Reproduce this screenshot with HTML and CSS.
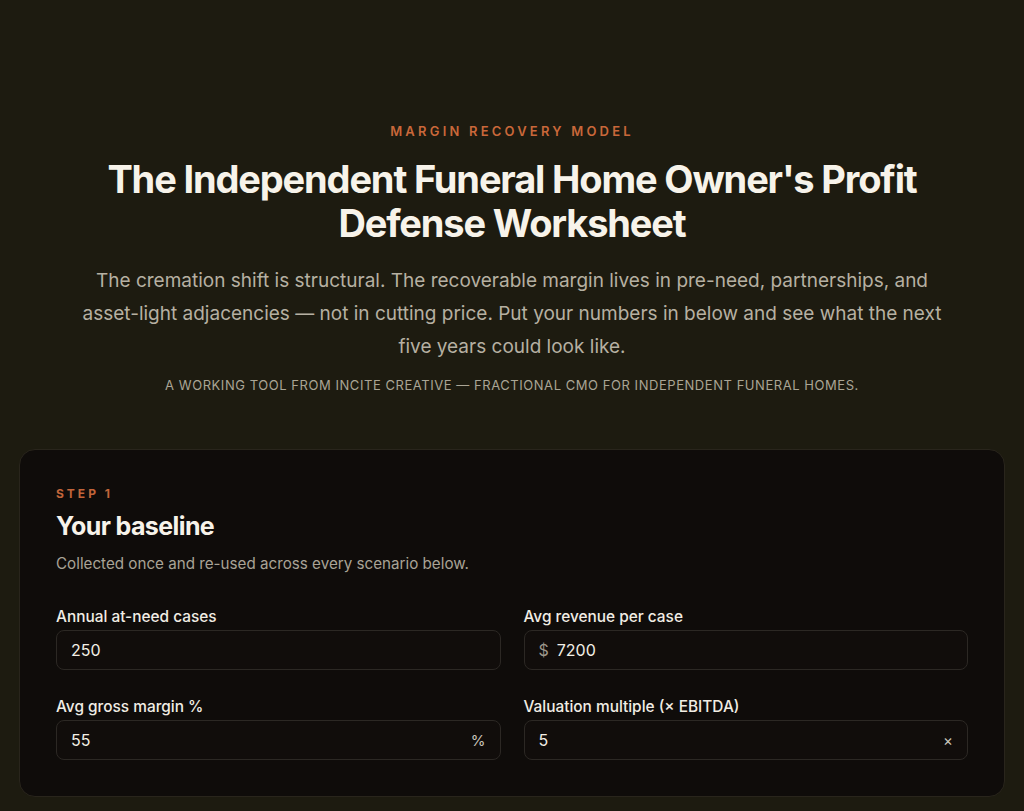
FILE: index.html
```html
<!DOCTYPE html>
<html lang="en">
<head>
<meta charset="utf-8">
<title>Profit Defense Worksheet</title>
<link rel="stylesheet" href="styles.css">
</head>
<body>
<main class="page">
  <header class="hero">
    <div class="eyebrow">Margin Recovery Model</div>
    <h1 class="title">The Independent Funeral Home Owner's Profit Defense Worksheet</h1>
    <p class="lede">The cremation shift is structural. The recoverable margin lives in pre-need, partnerships, and asset-light adjacencies — not in cutting price. Put your numbers in below and see what the next five years could look like.</p>
    <p class="byline">A working tool from Incite Creative — fractional CMO for independent funeral homes.</p>
  </header>

  <section class="card">
    <div class="step">Step 1</div>
    <h2 class="card-title">Your baseline</h2>
    <p class="card-desc">Collected once and re-used across every scenario below.</p>
    <div class="grid">
      <label class="field">
        <span class="label">Annual at-need cases</span>
        <span class="input"><span class="value">250</span></span>
      </label>
      <label class="field">
        <span class="label">Avg revenue per case</span>
        <span class="input"><span class="prefix">$</span><span class="value">7200</span></span>
      </label>
      <label class="field">
        <span class="label">Avg gross margin %</span>
        <span class="input"><span class="value">55</span><span class="suffix">%</span></span>
      </label>
      <label class="field">
        <span class="label">Valuation multiple (× EBITDA)</span>
        <span class="input"><span class="value">5</span><span class="suffix">×</span></span>
      </label>
    </div>
  </section>
</main>
</body>
</html>
```
FILE: styles.css
```css
* { box-sizing: border-box; }
html, body { margin: 0; padding: 0; }
body {
  background: #1d1b10;
  font-family: Inter, "Liberation Sans", sans-serif;
  color: #f3efe6;
}
.page {
  padding: 123px 19px 0;
}
.hero {
  text-align: center;
  max-width: 880px;
  margin: 0 auto;
}
.eyebrow {
  font-size: 13px;
  font-weight: 600;
  letter-spacing: 3.2px;
  text-transform: uppercase;
  color: #c9683a;
  line-height: 16px;
}
.title {
  margin: 18px auto 0;
  font-size: 38px;
  line-height: 44px;
  font-weight: 700;
  letter-spacing: -1.15px;
  color: #f7f3ea;
  max-width: 820px;
}
.lede {
  margin: 19px 0 0;
  font-size: 19px;
  line-height: 33px;
  color: #b6b0a2;
}
.byline {
  margin: 13px 0 0;
  font-size: 13px;
  line-height: 18px;
  letter-spacing: 0.55px;
  text-transform: uppercase;
  color: #aaa595;
}
.card {
  margin-top: 55px;
  background: #0f0c0a;
  border: 1px solid #29251c;
  border-radius: 16px;
  padding: 36px 36px 36px;
}
.step {
  font-size: 12px;
  font-weight: 700;
  letter-spacing: 3px;
  text-transform: uppercase;
  color: #c2653a;
  line-height: 16px;
}
.card-title {
  margin: 8px 0 0;
  font-size: 25px;
  line-height: 32px;
  font-weight: 700;
  letter-spacing: -0.6px;
  color: #f7f3ea;
}
.card-desc {
  margin: 12px 0 0;
  font-size: 15.2px;
  line-height: 20px;
  color: #a9a396;
}
.grid {
  margin-top: 33px;
  display: grid;
  grid-template-columns: 1fr 1fr;
  column-gap: 23px;
  row-gap: 27px;
}
.field {
  display: flex;
  flex-direction: column;
  gap: 3px;
}
.label {
  font-size: 15.4px;
  line-height: 20px;
  font-weight: 500;
  color: #f1ede4;
}
.input {
  display: flex;
  align-items: center;
  height: 40px;
  padding: 0 14px;
  border: 1px solid #2c2824;
  border-radius: 8px;
  background: #110d0b;
  font-size: 16px;
  color: #f3efe6;
}
.value { flex: 1; }
.prefix {
  color: #9c968a;
  margin-right: 8px;
}
.suffix {
  color: #c9c4ba;
  font-size: 15px;
}
```
